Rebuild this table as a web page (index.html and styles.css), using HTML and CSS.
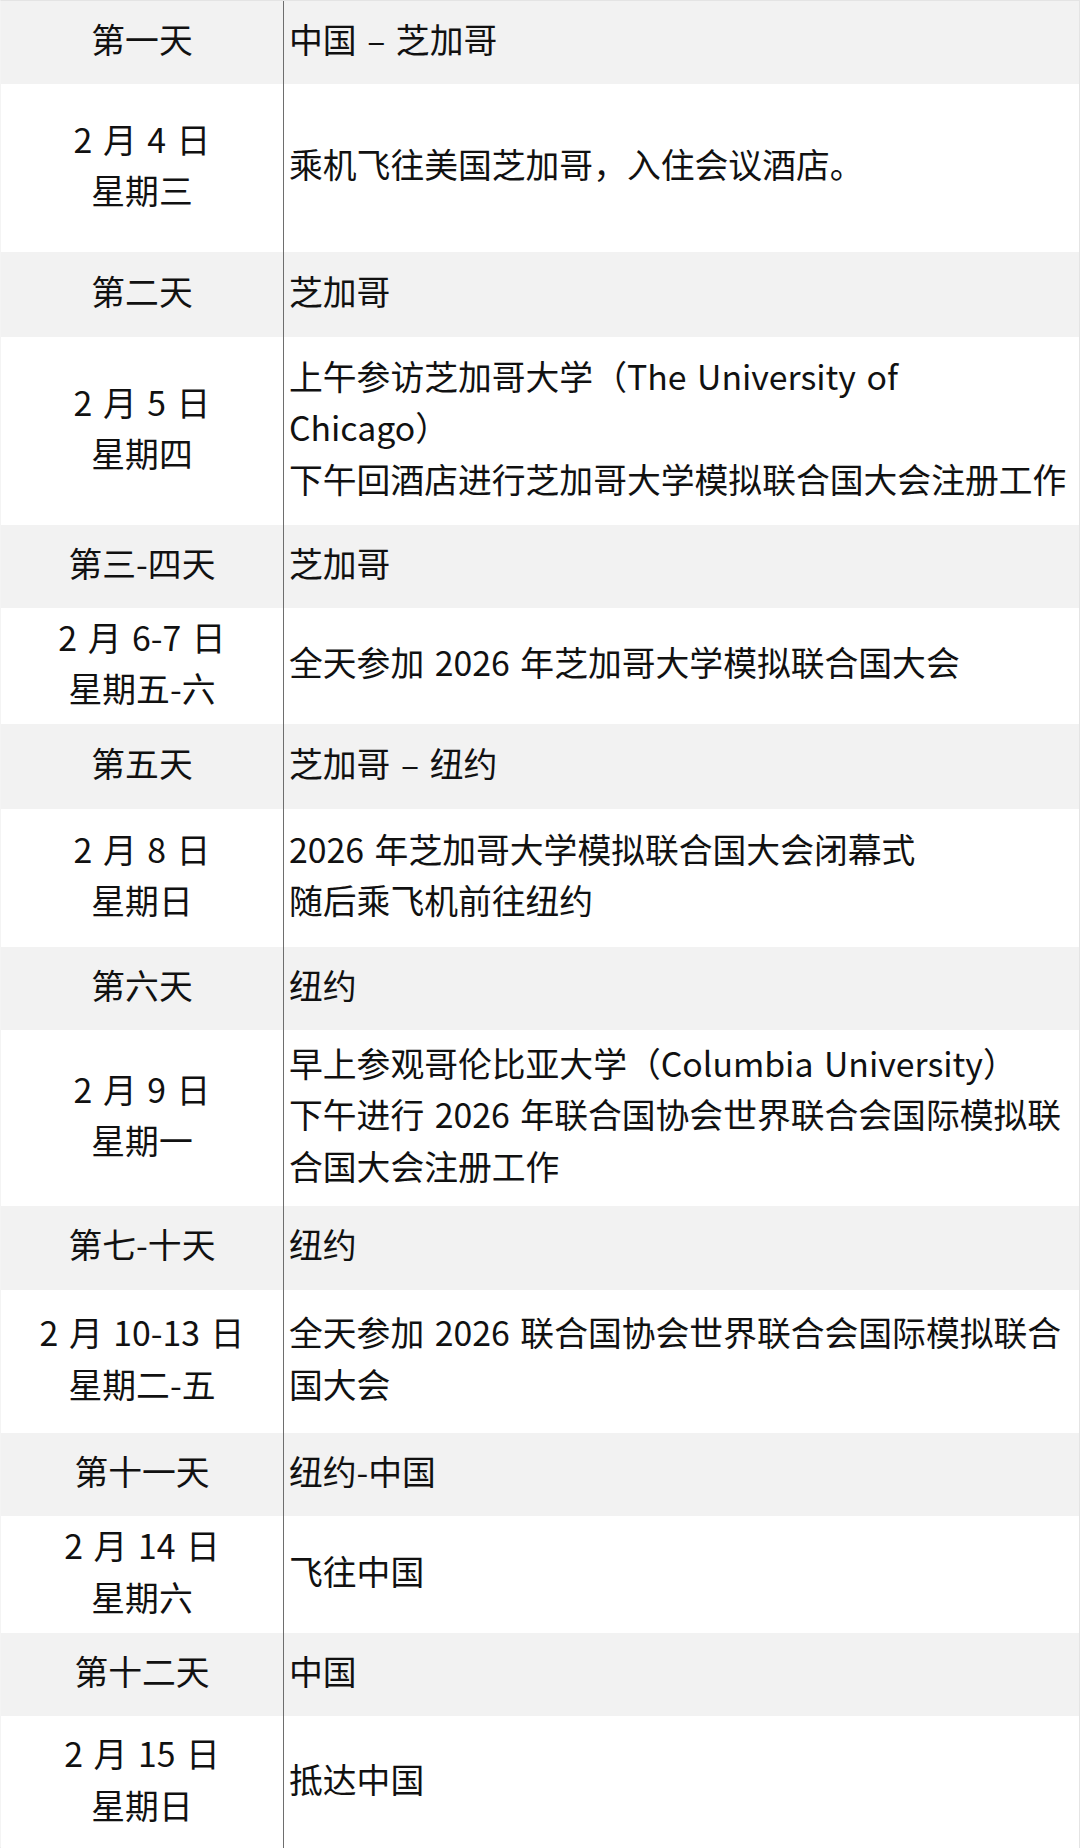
FILE: index.html
```html
<!DOCTYPE html>
<html lang="zh-CN">
<head>
<meta charset="utf-8">
<title>行程安排</title>
<link rel="stylesheet" href="styles.css">
</head>
<body>
<div class="schedule">
  <div class="cell day alt">第一天</div>
  <div class="cell info alt">中国 – 芝加哥</div>

  <div class="cell day">2 月 4 日<br>星期三</div>
  <div class="cell info">乘机飞往美国芝加哥，入住会议酒店。</div>

  <div class="cell day alt">第二天</div>
  <div class="cell info alt">芝加哥</div>

  <div class="cell day">2 月 5 日<br>星期四</div>
  <div class="cell info">上午参访芝加哥大学（The University of<br>Chicago）<br>下午回酒店进行芝加哥大学模拟联合国大会注册工作</div>

  <div class="cell day alt">第三-四天</div>
  <div class="cell info alt">芝加哥</div>

  <div class="cell day">2 月 6-7 日<br>星期五-六</div>
  <div class="cell info">全天参加 2026 年芝加哥大学模拟联合国大会</div>

  <div class="cell day alt">第五天</div>
  <div class="cell info alt">芝加哥 – 纽约</div>

  <div class="cell day">2 月 8 日<br>星期日</div>
  <div class="cell info">2026 年芝加哥大学模拟联合国大会闭幕式<br>随后乘飞机前往纽约</div>

  <div class="cell day alt">第六天</div>
  <div class="cell info alt">纽约</div>

  <div class="cell day">2 月 9 日<br>星期一</div>
  <div class="cell info">早上参观哥伦比亚大学（Columbia University）<br>下午进行 2026 年联合国协会世界联合会国际模拟联<br>合国大会注册工作</div>

  <div class="cell day alt">第七-十天</div>
  <div class="cell info alt">纽约</div>

  <div class="cell day">2 月 10-13 日<br>星期二-五</div>
  <div class="cell info">全天参加 2026 联合国协会世界联合会国际模拟联合<br>国大会</div>

  <div class="cell day alt">第十一天</div>
  <div class="cell info alt">纽约-中国</div>

  <div class="cell day">2 月 14 日<br>星期六</div>
  <div class="cell info">飞往中国</div>

  <div class="cell day alt">第十二天</div>
  <div class="cell info alt">中国</div>

  <div class="cell day">2 月 15 日<br>星期日</div>
  <div class="cell info">抵达中国</div>
</div>
</body>
</html>
```

FILE: styles.css
```css
* {
  box-sizing: border-box;
}

html, body {
  margin: 0;
  padding: 0;
  background: #ffffff;
}

body {
  font-family: "Noto Sans CJK SC", "Noto Sans", sans-serif;
  font-size: 33.8px;
  line-height: 51.5px;
  color: #111111;
  word-spacing: 3px;
}

.schedule {
  width: 1080px;
  height: 1848px;
  display: grid;
  grid-template-columns: 283px 1fr;
  grid-template-rows: 83px 168px 85px 188px 83px 116px 85px 138px 83px 176px 84px 143px 83px 117px 83px 133px;
  border: 1px solid #e4e4e4;
  border-left-color: #f4f4f4;
}

.cell {
  display: flex;
  align-items: center;
  padding-bottom: 8px;
  background: #ffffff;
}

.cell.alt {
  background: #f2f2f2;
}

.day {
  justify-content: center;
  text-align: center;
  border-right: 1px solid #6e6e6e;
}

.info {
  padding-left: 5px;
  white-space: nowrap;
}
```
